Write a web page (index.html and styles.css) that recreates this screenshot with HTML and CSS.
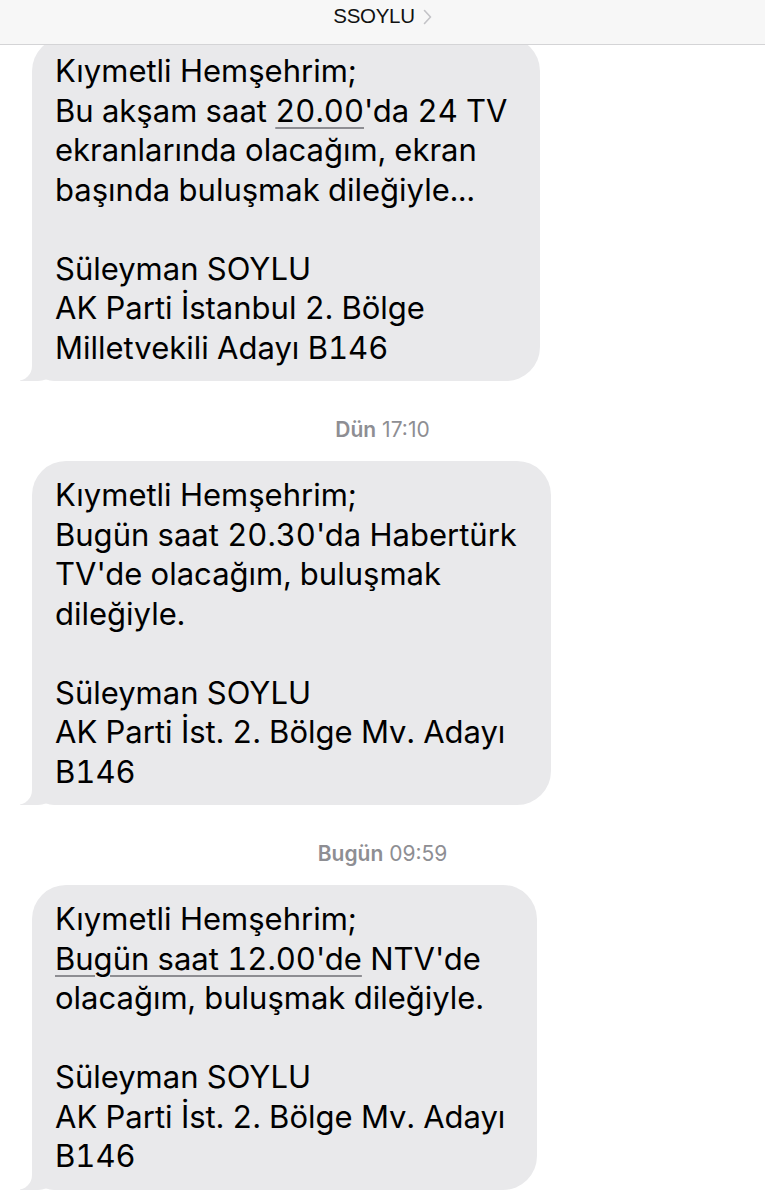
FILE: index.html
```html
<!DOCTYPE html>
<html lang="tr">
<head>
<meta charset="utf-8">
<title>SSOYLU</title>
<link rel="stylesheet" href="styles.css">
</head>
<body>
<header class="nav">
  <span class="nav-title">SSOYLU</span>
  <svg class="nav-chevron" width="9" height="16" viewBox="0 0 9 16"><polyline points="1.5,1.5 7.5,8 1.5,14.5" fill="none" stroke="#c3c3c7" stroke-width="1.6" stroke-linecap="round" stroke-linejoin="round"/></svg>
</header>
<main class="thread">
  <div class="bubble bubble-a">Kıymetli Hemşehrim;<br>Bu akşam saat <span class="link">20.00</span>'da 24 TV<br>ekranlarında olacağım, ekran<br>başında buluşmak dileğiyle...<br><br>Süleyman SOYLU<br>AK Parti İstanbul 2. Bölge<br>Milletvekili Adayı B146</div>
  <div class="stamp"><span class="stamp-day">Dün</span> 17:10</div>
  <div class="bubble bubble-b">Kıymetli Hemşehrim;<br>Bugün saat 20.30'da Habertürk<br>TV'de olacağım, buluşmak<br>dileğiyle.<br><br>Süleyman SOYLU<br>AK Parti İst. 2. Bölge Mv. Adayı<br>B146</div>
  <div class="stamp"><span class="stamp-day">Bugün</span> 09:59</div>
  <div class="bubble bubble-c">Kıymetli Hemşehrim;<br><span class="link">Bugün saat 12.00'de</span> NTV'de<br>olacağım, buluşmak dileğiyle.<br><br>Süleyman SOYLU<br>AK Parti İst. 2. Bölge Mv. Adayı<br>B146</div>
</main>
</body>
</html>
```
FILE: styles.css
```css
html, body {
  margin: 0;
  padding: 0;
  background: #ffffff;
}
body {
  font-family: Inter, "Liberation Sans", Arial, sans-serif;
  color: #000;
  width: 765px;
  height: 1200px;
  overflow: hidden;
}
.nav {
  position: fixed;
  top: 0;
  left: 0;
  right: 0;
  height: 45px;
  background: #f7f7f7;
  border-bottom: 1px solid #d4d4d6;
  display: flex;
  justify-content: center;
  align-items: flex-start;
  gap: 8px;
  padding-top: 4px;
  box-sizing: border-box;
  z-index: 10;
}
.nav-title {
  font-family: "Liberation Sans", Arial, sans-serif;
  font-size: 20.5px;
  line-height: 24px;
  letter-spacing: -0.3px;
  color: #111;
}
.nav-chevron {
  margin-top: 5px;
}
.thread {
  display: flex;
  flex-direction: column;
  align-items: flex-start;
  padding: 37px 0 0 32px;
}
.bubble {
  position: relative;
  z-index: 0;
  box-sizing: border-box;
  background: #e9e9eb;
  border-radius: 34px;
  border-bottom-left-radius: 22px;
  padding: 14px 10px 14px 23px;
  font-size: 31px;
  line-height: 39.5px;
  font-variant-numeric: tabular-nums;
  white-space: nowrap;
}
.bubble::before {
  content: "";
  position: absolute;
  z-index: -1;
  left: -12px;
  bottom: 0;
  width: 40px;
  height: 30px;
  background: #e9e9eb;
  border-bottom-right-radius: 22px;
}
.bubble::after {
  content: "";
  position: absolute;
  z-index: -1;
  left: -44px;
  bottom: 0;
  width: 44px;
  height: 30px;
  background: #ffffff;
  border-bottom-right-radius: 15px;
}
.bubble-a { width: 508px; }
.bubble-b { width: 519px; }
.bubble-c { width: 505px; }
.link {
  text-decoration: underline;
  text-decoration-color: #8d8d92;
  text-decoration-thickness: 1.5px;
  text-underline-offset: 5px;
}
.stamp {
  align-self: center;
  margin: 36px 0 19px -32px;
  font-size: 21px;
  line-height: 25px;
  color: #8e8e93;
}
.stamp-day {
  font-weight: 600;
}
```
